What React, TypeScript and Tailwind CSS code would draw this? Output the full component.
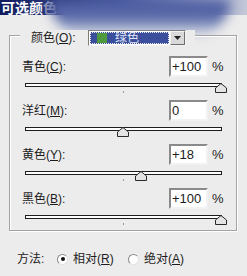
import React from 'react';

const rows = [
  { label: '青色', key: 'C', value: '+100', pos: 100 },
  { label: '洋红', key: 'M', value: '0', pos: 0 },
  { label: '黄色', key: 'Y', value: '+18', pos: 18 },
  { label: '黑色', key: 'B', value: '+100', pos: 100 },
];

const Thumb = () => (
  <svg width="12" height="10" viewBox="0 0 12 10">
    <path d="M6 0.5 L11.5 5 L11.5 9.5 L0.5 9.5 L0.5 5 Z" fill="#e4e4e4" stroke="#2a2a2a" strokeWidth="1" />
  </svg>
);

const Slider = ({ pos }: { pos: number }) => (
  <div className="relative ml-[15px] h-[10px] w-[197px]">
    <div className="mt-[4px] h-[4px] w-full border border-[#1e1e1e] bg-white"></div>
    <div className="absolute left-[98px] top-[8px] h-[2px] w-px bg-[#9a9a9a]"></div>
    <div className="absolute top-0" style={{ left: 98 + pos * 0.98 - 6 }}>
      <Thumb />
    </div>
  </div>
);

const Radio = ({ checked }: { checked?: boolean }) => (
  <span className="flex h-[11px] w-[11px] items-center justify-center rounded-full border border-[#8a8a8a] border-b-[#e2e2e2] border-r-[#e2e2e2] bg-white">
    {checked && <span className="h-[4px] w-[4px] rounded-full bg-[#111]"></span>}
  </span>
);

const Key = ({ k, colon = true }: { k: string; colon?: boolean }) => (
  <>
    (<span className="underline underline-offset-1">{k}</span>){colon && ':'}
  </>
);

export default function App() {
  return (
    <div className="h-[276px] w-[247px] overflow-hidden bg-[#ececec] font-['Liberation_Sans','Noto_Sans_CJK_SC',sans-serif] text-[12px] text-[#1c1c1c]">
      {/* title bar, with the blurred smear pulled up over it */}
      <div className="h-[35px]">
        <div className="flex h-[15px] items-center bg-gradient-to-r from-[#111c5e] via-[#4a5a9e] to-[#c4c8d8] pl-px">
          <span className="text-[14px] font-bold leading-none text-white">可选颜</span>
          <span className="text-[14px] font-bold leading-none text-white/50">色</span>
        </div>
        <div className="-mt-[15px] ml-[50px] h-[36px] w-[180px] rounded-b-[70px] bg-gradient-to-b from-[#4a5aa0] via-[#5a6aa8] to-[#ececec] blur-[6px]"></div>
      </div>

      <div className="relative ml-[9px] h-[196px] w-[228px] border border-[#a3a3a3] shadow-[inset_1px_1px_0_#fff,1px_1px_0_#fff]">
        <div className="-mt-[6px] ml-[10px] flex h-[16px] w-fit items-center bg-[#ececec] pl-[11px] pr-[9px]">
          <span className="w-[57px]">
            颜色<Key k="O" />
          </span>
          <div className="flex h-[16px] w-[98px] border border-[#7d7d7d] border-b-[#f4f4f4] border-r-[#f4f4f4] bg-white">
            <div className="m-px flex flex-1 items-center gap-[8px] border border-dotted border-[#e8e8ff] bg-[#3b4f9c] pl-[6px]">
              <span className="h-[10px] w-[10px] bg-[#4f9a3e]"></span>
              <span className="leading-none text-[#dfe4f7]">绿色</span>
            </div>
            <div className="flex w-[15px] items-center justify-center border border-[#f4f4f4] border-b-[#6d6d6d] border-r-[#6d6d6d] bg-[#d9d9d9]">
              <svg width="7" height="4" viewBox="0 0 7 4">
                <path d="M0 0 H7 L3.5 4 Z" fill="#222" />
              </svg>
            </div>
          </div>
        </div>

        <div className="mt-[10px] flex flex-col gap-[7px]">
          {rows.map((r) => (
            <div key={r.key}>
              <div className="flex h-[21px] items-center pl-[12px]">
                <span className="w-[147px]">
                  {r.label}
                  <Key k={r.key} />
                </span>
                <div className="flex h-[21px] w-[39px] items-center border-2 border-[#8a8a8a] border-b-[#f2f2f2] border-r-[#f2f2f2] bg-white pl-px text-[13px]">
                  {r.value}
                </div>
                <span className="ml-[4px] text-[13px]">%</span>
              </div>
              <div className="mt-[6px]">
                <Slider pos={r.pos} />
              </div>
            </div>
          ))}
        </div>
      </div>

      <div className="mt-[20px] flex h-[16px] items-center pl-[17px]">
        <span className="w-[40px]">方法:</span>
        <Radio checked />
        <span className="ml-[5px] w-[55px]">
          相对<Key k="R" colon={false} />
        </span>
        <Radio />
        <span className="ml-[5px]">
          绝对<Key k="A" colon={false} />
        </span>
      </div>
    </div>
  );
}
